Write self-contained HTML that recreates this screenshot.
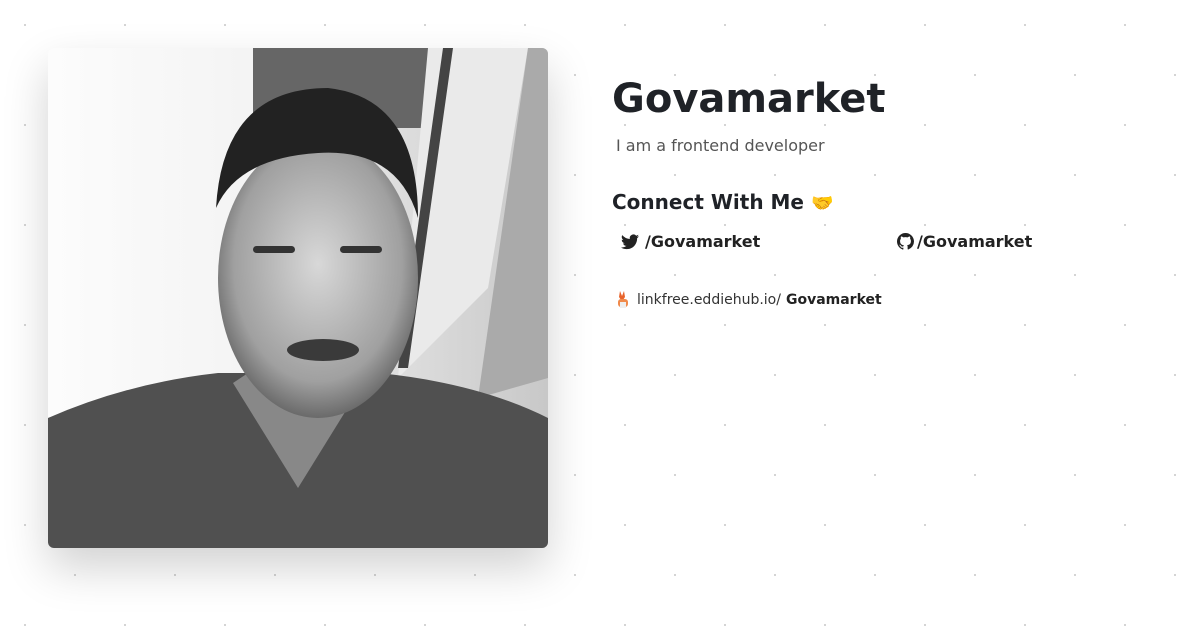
<!DOCTYPE html>
<html><head><style>
html,body{margin:0;width:1200px;height:627px;overflow:hidden;background:#fff;font-family:"DejaVu Sans","Liberation Sans",sans-serif;color:#222;}
body{background-image:radial-gradient(circle at 25px 25px,#ccc 0 0.8px,transparent 1.2px),radial-gradient(circle at 75px 75px,#ccc 0 0.8px,transparent 1.2px);background-size:100px 100px;}
.card{position:absolute;left:48px;top:48px;width:500px;height:500px;border-radius:6px;overflow:hidden;box-shadow:0 20px 45px rgba(0,0,0,.18);background:#f6f6f6;}
h1{position:absolute;left:612px;top:76px;margin:0;font-size:40px;font-weight:bold;color:#1f2227;}
.sub{position:absolute;left:616px;top:136px;font-size:16px;color:#555;}
.cw{position:absolute;left:612px;top:190px;font-size:20px;font-weight:bold;color:#1f2227;}
.lnk{position:absolute;top:232px;font-size:16px;font-weight:bold;color:#222;display:flex;align-items:center;gap:6px;}
.lf{position:absolute;left:614px;top:290px;font-size:14px;color:#333;display:flex;align-items:center;gap:5px;}
</style></head><body>
<div class="card">
<svg width="500" height="500" viewBox="0 0 500 500">
<defs><linearGradient id="bg" x1="0" x2="1"><stop offset="0" stop-color="#fcfcfc"/><stop offset=".4" stop-color="#f4f4f4"/><stop offset="1" stop-color="#c8c8c8"/></linearGradient>
<radialGradient id="face" cx=".5" cy=".45" r=".6"><stop offset="0" stop-color="#d8d8d8"/><stop offset=".7" stop-color="#a0a0a0"/><stop offset="1" stop-color="#555"/></radialGradient></defs>
<rect width="500" height="500" fill="url(#bg)"/>
<rect x="205" y="0" width="190" height="80" fill="#666"/>
<polygon points="380,0 480,0 440,240 350,330" fill="#eaeaea"/>
<polygon points="395,0 405,0 360,320 350,320" fill="#444"/>
<polygon points="480,0 500,0 500,330 430,350" fill="#aaa"/>
<path d="M0,370 Q80,335 170,325 L330,325 Q430,335 500,370 L500,500 L0,500Z" fill="#505050"/>
<path d="M185,335 L250,440 L315,335 L300,325 L200,325Z" fill="#888"/>
<ellipse cx="270" cy="230" rx="100" ry="140" fill="url(#face)"/>
<path d="M168,160 Q175,40 280,40 Q370,50 370,170 Q350,100 270,105 Q190,110 168,160Z" fill="#222"/>
<rect x="205" y="198" width="42" height="7" rx="3.5" fill="#333"/>
<rect x="292" y="198" width="42" height="7" rx="3.5" fill="#333"/>
<ellipse cx="275" cy="302" rx="36" ry="11" fill="#3a3a3a"/>
</svg></div>
<h1>Govamarket</h1>
<div class="sub">I am a frontend developer</div>
<div class="cw">Connect With Me <span style="font-size:18px">🤝</span></div>
<div class="lnk" style="left:621px"><svg width="18" height="16" viewBox="0 0 24 20"><path fill="#222" d="M24 2.4a10 10 0 0 1-2.8.8A5 5 0 0 0 23.3.4a10 10 0 0 1-3.1 1.2A4.9 4.9 0 0 0 11.8 6 14 14 0 0 1 1.7.9a4.9 4.9 0 0 0 1.5 6.6A4.9 4.9 0 0 1 1 6.9a4.9 4.9 0 0 0 3.9 4.8 5 5 0 0 1-2.2.1 4.9 4.9 0 0 0 4.6 3.4A9.9 9.9 0 0 1 0 17.3 14 14 0 0 0 7.5 19.5c9.1 0 14-7.5 14-14v-.6A10 10 0 0 0 24 2.4z"/></svg>/Govamarket</div>
<div class="lnk" style="left:897px;gap:3px"><svg width="17" height="17" viewBox="0 0 16 16"><path fill="#222" d="M8 0C3.6 0 0 3.6 0 8c0 3.5 2.3 6.5 5.5 7.6.4.1.5-.2.5-.4v-1.4c-2.2.5-2.7-1-2.7-1-.4-.9-.9-1.2-.9-1.2-.7-.5.1-.5.1-.5.8.1 1.2.8 1.2.8.7 1.3 1.9.9 2.3.7.1-.5.3-.9.5-1.1-1.8-.2-3.6-.9-3.6-4 0-.9.3-1.600.8-2.100-.1-.2-.4-1 .1-2.1 0 0 .7-.2 2.2.8a7.6 7.6 0 0 1 4 0c1.5-1 2.2-.8 2.2-.8.4 1.1.2 1.900.1 2.100.5.6.8 1.300.8 2.100 0 3.1-1.9 3.7-3.6 3.9.3.3.5.8.5 1.5v2.2c0 .2.1.5.6.4A8 8 0 0 0 16 8c0-4.4-3.6-8-8-8z"/></svg>/Govamarket</div>
<div class="lf"><svg width="18" height="20" viewBox="0 0 18 20"><path d="M6 1l2 5 2-5 1 6-2 3h-2l-2-3z" fill="#e8632b"/><rect x="4" y="9" width="10" height="8" rx="3" fill="#f08a4b"/><rect x="6" y="12" width="6" height="6" fill="#eee"/></svg>linkfree.eddiehub.io/ <b style="color:#222">Govamarket</b></div>
</body></html>
